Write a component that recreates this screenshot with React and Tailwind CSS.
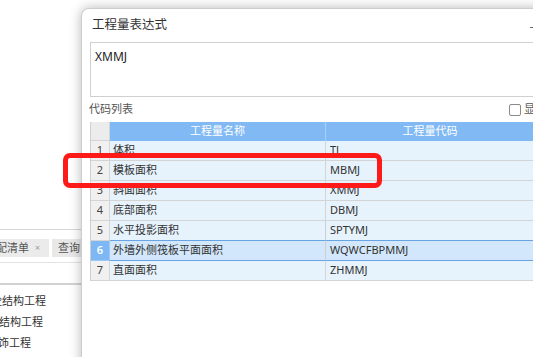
import React from "react";

const rows = [
  { no: 1, name: "体积", code: "TJ" },
  { no: 2, name: "模板面积", code: "MBMJ" },
  { no: 3, name: "斜面面积", code: "XMMJ" },
  { no: 4, name: "底部面积", code: "DBMJ" },
  { no: 5, name: "水平投影面积", code: "SPTYMJ" },
  { no: 6, name: "外墙外侧筏板平面面积", code: "WQWCFBPMMJ" },
  { no: 7, name: "直面面积", code: "ZHMMJ" },
];

function CodeTable() {
  return (
    <div className="w-[470px] border-l border-[#cfcfcf]">
      <div className="grid grid-cols-[19px_216px_1fr] h-[19px] text-white">
        <div className="bg-[#ececec] border-r border-b border-[#d4d4d4]" />
        <div className="bg-[#80b9f4] border-r border-[#a8cff7] flex items-center justify-center">工程量名称</div>
        <div className="bg-[#80b9f4] flex items-center justify-center pr-[26px]">工程量代码</div>
      </div>
      {rows.map((r) => {
        const sel = r.no === 6;
        const beforeSel = r.no === 5;
        return (
          <div key={r.no} className="grid grid-cols-[19px_216px_1fr] h-[20px]">
            <div
              className={
                sel
                  ? "bg-[#7db8f4] text-white font-semibold border-r border-b border-[#9cc8f4] flex items-center justify-center"
                  : "bg-[#f0f0f0] text-[#444] border-r border-b border-[#d4d4d4] flex items-center justify-center"
              }
            >
              {r.no}
            </div>
            <div
              className={
                sel
                  ? "bg-[#d2e7fb] border-r border-b border-r-[#cfcfcf] border-b-[#68a4e2] flex items-center pl-[3px]"
                  : beforeSel
                  ? "bg-[#e6f2fc] border-r border-b border-r-[#cfcfcf] border-b-[#68a4e2] flex items-center pl-[3px]"
                  : "bg-[#e6f2fc] border-r border-b border-[#d4d4d4] flex items-center pl-[3px]"
              }
            >
              {r.name}
            </div>
            <div
              className={
                sel
                  ? "bg-[#d2e7fb] border-b border-[#68a4e2] flex items-center pl-[4px]"
                  : beforeSel
                  ? "bg-[#e6f2fc] border-b border-[#68a4e2] flex items-center pl-[4px]"
                  : "bg-[#e6f2fc] border-b border-[#d4d4d4] flex items-center pl-[4px]"
              }
            >
              {r.code}
            </div>
          </div>
        );
      })}
    </div>
  );
}

export default function App() {
  return (
    <div className="relative w-[533px] h-[357px] overflow-hidden bg-white text-[11px] text-[#333] font-['Noto_Sans','Noto_Sans_CJK_SC',sans-serif]">
      {/* app behind the dialog */}
      <div className="flex flex-col pt-[229px] w-[90px]">
        <div className="border-t border-[#d6d6d6] h-[10px]" />
        <div className="flex gap-[3px] h-[18px] text-[#555]">
          <div className="w-[49px] bg-[#ebebeb] flex items-center overflow-hidden whitespace-nowrap">
            <span className="-ml-[4px]">配清单</span>
            <span className="ml-[6px] text-[9px] text-[#9a9a9a]">×</span>
          </div>
          <div className="flex-1 bg-[#e8e8e8] flex items-center pl-[6px] whitespace-nowrap overflow-hidden">查询</div>
        </div>
        <div className="border-t border-[#e3e3e3] mt-[5px] h-[21px]" />
        <div className="border-t-2 border-[#d2d2d2] pt-[6px] flex flex-col text-[#333] whitespace-nowrap">
          <div className="h-[21px] flex items-center -ml-[9px]">砼结构工程</div>
          <div className="h-[21px] flex items-center -ml-[12px]">钢结构工程</div>
          <div className="h-[21px] flex items-center -ml-[13px]">装饰工程</div>
        </div>
      </div>

      {/* dialog window */}
      <div className="absolute left-[81px] top-[8px] w-[480px] h-[370px] bg-white rounded-tl-[8px] border border-[#cdcdcd] shadow-[0_0_12px_rgba(0,0,0,0.28)]">
        <div className="h-[33px] flex items-center justify-between pl-[10px] pr-[26px]">
          <span className="text-[12.5px] text-[#333]">工程量表达式</span>
          <span className="block w-[4px] h-[1px] bg-[#666] mt-[4px]" />
        </div>
        <div className="ml-[8px] h-[55px] border border-[#d0d0d0] px-[4px] pt-[5px] text-[12px] text-[#222]">XMMJ</div>
        <div className="h-[25px] flex items-center justify-between pl-[7px] pr-[21px] text-[#555]">
          <span>代码列表</span>
          <div className="flex items-center gap-[3px] w-[30px] whitespace-nowrap">
            <span className="block shrink-0 w-[12px] h-[12px] border border-[#8a8a8a] rounded-[2px] bg-white" />
            <span>显示</span>
          </div>
        </div>
        <div className="ml-[8px]">
          <CodeTable />
        </div>
      </div>

      {/* red annotation box */}
      <div className="absolute left-[63px] top-[153px] w-[319px] h-[35px] border-[5px] border-[#ff1a1a] rounded-[7px]" />
    </div>
  );
}
